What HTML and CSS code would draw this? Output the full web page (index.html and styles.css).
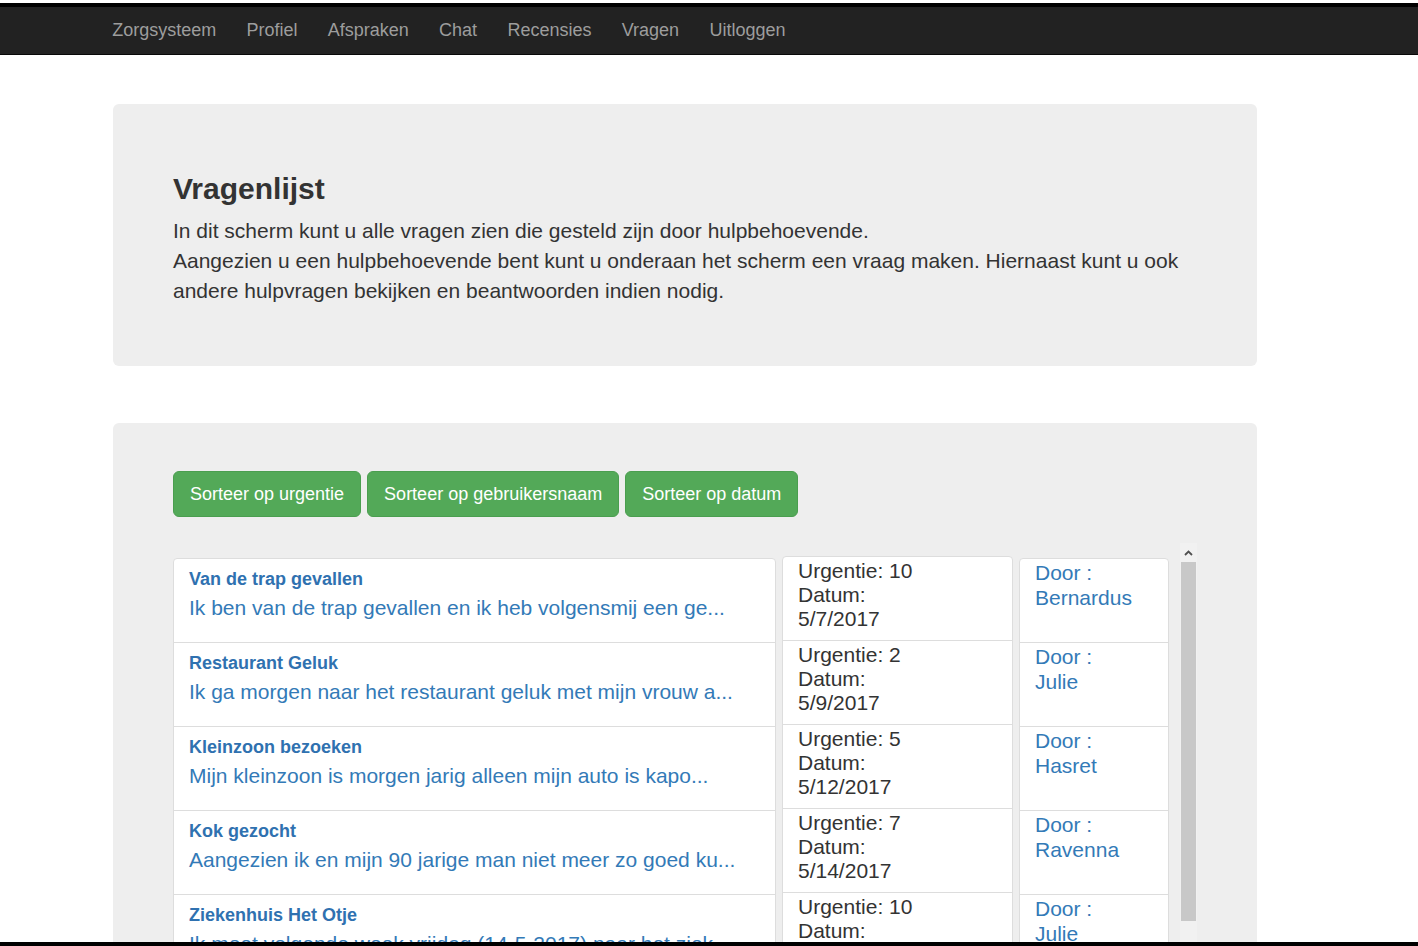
FILE: index.html
```html
<!DOCTYPE html>
<html lang="nl">
<head>
<meta charset="utf-8">
<title>Vragenlijst</title>
<link rel="stylesheet" href="styles.css">
</head>
<body>
<div class="topline"></div>
<nav class="navbar">
  <a class="brand" href="#">Zorgsysteem</a>
  <a class="nav-link" href="#">Profiel</a>
  <a class="nav-link" href="#">Afspraken</a>
  <a class="nav-link" href="#">Chat</a>
  <a class="nav-link" href="#">Recensies</a>
  <a class="nav-link" href="#">Vragen</a>
  <a class="nav-link" href="#">Uitloggen</a>
</nav>

<main class="container">
  <section class="jumbotron intro">
    <h2 class="title">Vragenlijst</h2>
    <p class="lead">In dit scherm kunt u alle vragen zien die gesteld zijn door hulpbehoevende.<br>Aangezien u een hulpbehoevende bent kunt u onderaan het scherm een vraag maken. Hiernaast kunt u ook andere hulpvragen bekijken en beantwoorden indien nodig.</p>
  </section>

  <section class="jumbotron questions">
    <div class="sort-buttons">
      <button class="btn">Sorteer op urgentie</button>
      <button class="btn">Sorteer op gebruikersnaam</button>
      <button class="btn">Sorteer op datum</button>
    </div>

    <div class="scroll-area">
      <div class="columns">
        <div class="col col-main">
          <a class="item main-item" href="#"><h4 class="item-heading">Van de trap gevallen</h4><p class="item-text">Ik ben van de trap gevallen en ik heb volgensmij een ge...</p></a>
          <a class="item main-item" href="#"><h4 class="item-heading">Restaurant Geluk</h4><p class="item-text">Ik ga morgen naar het restaurant geluk met mijn vrouw a...</p></a>
          <a class="item main-item" href="#"><h4 class="item-heading">Kleinzoon bezoeken</h4><p class="item-text">Mijn kleinzoon is morgen jarig alleen mijn auto is kapo...</p></a>
          <a class="item main-item" href="#"><h4 class="item-heading">Kok gezocht</h4><p class="item-text">Aangezien ik en mijn 90 jarige man niet meer zo goed ku...</p></a>
          <a class="item main-item" href="#"><h4 class="item-heading">Ziekenhuis Het Otje</h4><p class="item-text">Ik moet volgende week vrijdag (14-5-2017) naar het ziek...</p></a>
        </div>
        <div class="col col-meta">
          <div class="item meta-item"><span>Urgentie: 10</span><span>Datum:</span><span>5/7/2017</span></div>
          <div class="item meta-item"><span>Urgentie: 2</span><span>Datum:</span><span>5/9/2017</span></div>
          <div class="item meta-item"><span>Urgentie: 5</span><span>Datum:</span><span>5/12/2017</span></div>
          <div class="item meta-item"><span>Urgentie: 7</span><span>Datum:</span><span>5/14/2017</span></div>
          <div class="item meta-item"><span>Urgentie: 10</span><span>Datum:</span><span>5/15/2017</span></div>
        </div>
        <div class="col col-user">
          <a class="item user-item" href="#"><span>Door :</span><span>Bernardus</span></a>
          <a class="item user-item" href="#"><span>Door :</span><span>Julie</span></a>
          <a class="item user-item" href="#"><span>Door :</span><span>Hasret</span></a>
          <a class="item user-item" href="#"><span>Door :</span><span>Ravenna</span></a>
          <a class="item user-item" href="#"><span>Door :</span><span>Julie</span></a>
        </div>
      </div>
      <div class="scrollbar" aria-hidden="true">
        <div class="sb-button">
          <svg width="9" height="6" viewBox="0 0 9 6"><path d="M1 5 L4.5 1.5 L8 5" fill="none" stroke="#505050" stroke-width="1.8"/></svg>
        </div>
        <div class="sb-thumb"></div>
      </div>
    </div>
  </section>
</main>
<div class="bottomline"></div>
</body>
</html>
```

FILE: styles.css
```css
html, body {
  margin: 0;
  padding: 0;
  height: 946px;
  overflow: hidden;
  background: #fff;
}

body {
  font-family: "Liberation Sans", Arial, Helvetica, sans-serif;
  color: #333;
  font-size: 14px;
}

a { text-decoration: none; }

.topline {
  height: 3px;
  background: #fff;
  border-bottom: 4px solid #000;
}

.navbar {
  background: #222;
  border-bottom: 1px solid #080808;
  display: flex;
  align-items: center;
  padding-left: 97px;
  padding-bottom: 2px;
  box-sizing: border-box;
  height: 48px;
}

.brand,
.nav-link {
  color: #9d9d9d;
  font-size: 18px;
  line-height: 20px;
  padding: 0 15.15px;
}

.container {
  padding-left: 113px;
  width: 1144px;
}

.jumbotron {
  background: #eee;
  border-radius: 6px;
  padding: 48px 60px;
}

.intro {
  margin-top: 49px;
}

.title {
  margin: 20px 0 11px;
  font-size: 30px;
  line-height: 33px;
  font-weight: bold;
  color: #333;
}

.lead {
  margin: 0 0 12px;
  font-size: 21px;
  line-height: 30px;
  color: #333;
}

.questions {
  margin-top: 57px;
  height: 600px;
}

.sort-buttons {
  display: flex;
  gap: 6px;
}

.btn {
  font-family: "Liberation Sans", Arial, sans-serif;
  font-size: 18px;
  line-height: 24px;
  padding: 10px 16px;
  color: #fff;
  background: #53a958;
  border: 1px solid #4a9e4f;
  border-radius: 6px;
  cursor: pointer;
}

.scroll-area {
  margin-top: 26px;
  display: flex;
  height: 420px;
}

.columns {
  display: flex;
  gap: 6px;
  align-items: flex-start;
  overflow: hidden;
}

.col {
  display: flex;
  flex-direction: column;
}

.item {
  display: block;
  box-sizing: border-box;
  height: 85px;
  margin-bottom: -1px;
  background: #fff;
  border: 1px solid #ddd;
  font-size: 21px;
}

.col .item:first-child {
  border-top-left-radius: 4px;
  border-top-right-radius: 4px;
}

.col-main {
  width: 603px;
  padding-top: 15px;
}

.main-item {
  padding: 10px 15px 9px;
}

.item-heading {
  margin: 0 0 4px;
  font-size: 18px;
  line-height: 20px;
  font-weight: bold;
  color: #2f71b0;
}

.item-text {
  margin: 0;
  font-size: 21px;
  line-height: 30px;
  color: #337ab7;
  white-space: nowrap;
}

.col-meta {
  width: 231px;
  padding-top: 13px;
}

.meta-item {
  padding: 1.5px 15px 0;
  color: #333;
  display: flex;
  flex-direction: column;
  line-height: 24px;
}

.col-user {
  width: 150px;
  padding-top: 15px;
}

.user-item {
  padding: 1px 15px 0;
  color: #337ab7;
  display: flex;
  flex-direction: column;
  line-height: 25px;
}

.scrollbar {
  margin-left: 11px;
  width: 17px;
  flex: none;
  background: #f1f1f1;
  display: flex;
  flex-direction: column;
  align-items: center;
}

.sb-button {
  height: 19px;
  width: 17px;
  display: flex;
  align-items: center;
  justify-content: center;
}

.sb-thumb {
  width: 15px;
  height: 359px;
  background: #c8c8c8;
}

.bottomline {
  position: fixed;
  left: 0;
  right: 0;
  bottom: 0;
  height: 4px;
  background: #000;
}
```
